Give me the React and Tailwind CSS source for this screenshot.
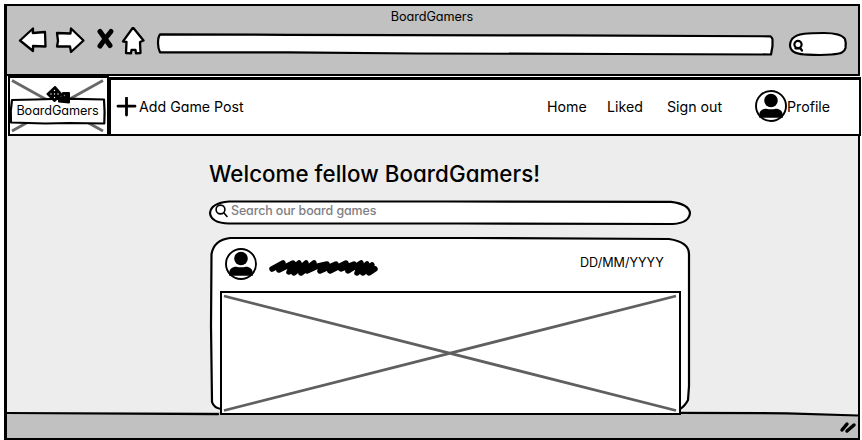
import React from "react";

function Sketch({ w, h, children }) {
  return (
    <svg className="pointer-events-none absolute inset-0 overflow-visible" width={w} height={h} viewBox={`0 0 ${w} ${h}`} fill="none" stroke="#000" strokeWidth="2.2" strokeLinejoin="round" strokeLinecap="round">
      {children}
    </svg>
  );
}

function Avatar() {
  return (
    <svg className="shrink-0" width="32" height="32" viewBox="0 0 32 32">
      <circle cx="16" cy="16" r="15" fill="#fff" stroke="#000" strokeWidth="1.9" />
      <circle cx="16" cy="10.5" r="6.800" />
      <path d="M4.200 27.800V25c0-4 3-6.300 7-6.300 3 .7 6.600.7 9.600 0 4 0 7 2.300 7 6.300v2.800Z" />
    </svg>
  );
}

function BrowserBar() {
  return (
    <header className="flex h-[70px] flex-col border-b-2 border-black bg-[#c1c1c1]">
      <div className="flex h-[21px] items-center justify-center pt-[1px] text-[12.700px] leading-none">
        <span className="mr-[1px] tracking-[-0.08px]">BoardGamers</span>
      </div>
      <div className="flex h-[28px] items-center">
        <svg className="ml-[11px]" width="130" height="28" viewBox="0 0 130 28" fill="#fff" stroke="#000" strokeWidth="2.300" strokeLinejoin="round">
          <path d="M2 13.500 15 1.500 14.800 6 27 5 27.500 19.500 15 19 15 24Z" />
          <path d="M39 6 52.500 6.500 53 1.500 65.500 13.500 53 25 52 19.500 39 19.500 40 14Z" />
          <path d="M82 4.500 92 18.500M93 4.500Q87.500 11 82 19" strokeWidth="5" strokeLinecap="round" />
          <path d="m115 .5 10.500 13-3.500 1.500 .5 11-4.500 .3-.5-3.500h-4l-.5 3.500-5-.3.500-11-3.500-.7Z" />
        </svg>
        <div className="relative ml-[10px] mt-[7px] h-[22px] w-[617px]">
          <Sketch w={617} h={22}>
            <path fill="#fff" d="M2 .3 130 .8 400 1.400 612.500 2.300q1.500 1 2 3V12l-1.500 8.500L460 20 260 19.500 130 18.300 2 18.300Q0 14 0 9 0 3 2 .3Z" />
          </Sketch>
        </div>
        <div className="relative ml-[14px] mt-[7px] h-[22px] w-[58px]">
          <Sketch w={58} h={22}>
            <path fill="#fff" d="M3 5C8-1 20-1 35-1c13 0 19 3 21 6 1 3 1 6 .5 9-1 4-4 6-14 6.500-10 1-17 .5-27 0C7 20 1 17 1 11Q1 8 3 5Z" />
            <circle cx="9" cy="10.500" r="3.600" />
            <path d="m6.500 14.500 5 0 1.500 2" />
          </Sketch>
        </div>
      </div>
    </header>
  );
}

function Logo() {
  return (
    <div className="relative flex h-[60px] w-[101px] shrink-0 items-end justify-center border-2 border-black bg-white pb-[11px]">
      <svg className="absolute inset-0" width="97" height="56" viewBox="0 0 97 56">
        <path d="M2 2.500 93 53M93 2.500 2 53" stroke="#686868" strokeWidth="2.800" />
      </svg>
      <div className="relative mr-[2px] flex h-[24px] w-[95px] items-center justify-center text-[12.700px] leading-none">
        <Sketch w={95} h={24}>
          <path fill="#fff" d="M2 1 25 .5 54-.3 94 .5Q95 13 94.300 24.500L60 24 35 24.500 1 23.500Q0 12 2 1Z" />
        </Sketch>
        <svg className="absolute left-[36px] top-[-13px]" width="26" height="20" viewBox="0 0 26 20">
          <path d="m9 1 6.500 7.500-7 6.500L1.500 8Z" stroke="#000" strokeWidth="2" strokeLinejoin="round" />
          <g fill="#fff"><circle cx="8.500" cy="4.500" r=".7" /><circle cx="5" cy="8" r=".7" /><circle cx="8.500" cy="8" r=".7" /><circle cx="12" cy="8" r=".7" /><circle cx="8.500" cy="11.500" r=".7" /></g>
          <path d="M17 7h6v9.500l-10-1v-3l3-1Z" stroke="#000" strokeWidth="2" strokeLinejoin="round" />
          <circle cx="18.500" cy="9.500" r=".8" fill="#777" />
        </svg>
        <span className="relative tracking-[-0.1px]">BoardGamers</span>
      </div>
    </div>
  );
}

function NavBar() {
  return (
    <div className="flex h-[60px] w-[854px] items-start bg-white pl-[1px]">
      <Logo />
      <nav className="mt-[1px] flex h-[59px] w-[752px] shrink-0 items-center border-2 border-t-3 border-black bg-white pl-[5px] text-[14.200px] leading-none">
        <svg className="shrink-0" width="21" height="20" viewBox="0 0 21 20">
          <path d="M10.500 1V18M2 9.200h17" stroke="#000" strokeWidth="2.800" strokeLinecap="round" />
        </svg>
        <span className="ml-[2px] w-[408px]">Add Game Post</span>
        <span className="w-[60px]">Home</span>
        <span className="w-[60px]">Liked</span>
        <span className="w-[88px]">Sign out</span>
        <div className="-mt-[2px] shrink-0">
          <Avatar />
        </div>
        <span>Profile</span>
      </nav>
    </div>
  );
}

function PostCard() {
  return (
    <article className="relative mt-[15px] h-[176px] w-[482px]">
      <Sketch w={482} h={176}>
        <path fill="#fff" d="M21 2 260 2 460 3Q480 6 480 18V150l-1 14q-3 6-8 9H12q-7-1-9-7L2 90 2.500 18Q5 4 21 2Z" />
      </Sketch>
      <div className="relative flex h-[55px] items-start pl-[16px] pt-[12px]">
        <Avatar />
        <svg className="ml-[11px] mt-[9px]" width="112" height="22" viewBox="0 0 112 22">
          <path d="M4 12 15 6 11 13 25 6 21 15 31 6 26 16 38 6 33 16 46 6 39 14 50 9 59 7 52 14 68 7 62 14 78 6 73 12 86 7 80 14 93 6 89 16 99 7 95 16 104 8 101 16 107 12" fill="none" stroke="#000" strokeWidth="5.500" strokeLinejoin="round" strokeLinecap="round" />
        </svg>
        <span className="ml-[200px] mt-[9px] text-[12.600px] leading-none">DD/MM/YYYY</span>
      </div>
      <div className="relative ml-[11px] h-[124px] w-[461px] border-[2.500px] border-black bg-white">
        <svg width="457" height="120" viewBox="0 0 457 120">
          <path d="M2 3 454 117.500M454 3 2 117.500" stroke="#5f5f5f" strokeWidth="2.800" />
        </svg>
      </div>
    </article>
  );
}

export default function App() {
  return (
    <div className="h-[440px] w-[862px] overflow-hidden bg-white pl-[4px] pt-[4px] font-['Inter',sans-serif] text-black [font-feature-settings:'cv11']">
      <div className="h-[436px] w-[856px] border-2 border-l-3 border-black bg-[#ededed]">
        <BrowserBar />
        <NavBar />
        <main className="relative z-10 flex h-[276px] flex-col pl-[202px]">
          <h1 className="mt-[26px] text-[22.300px] leading-[24px] tracking-[0.06px] [font-weight:450]">Welcome fellow BoardGamers!</h1>
          <div className="relative mt-[14px] flex h-[24px] w-[482px] items-center pl-[6px]">
            <Sketch w={482} h={24}>
              <path fill="#fff" d="M20 1.500 240 1.500 462 1.800Q480 4 481 13 480 23 464 24L250 23.500 20 23.500Q2 23 1 13 2 3 20 1.500Z" />
            </Sketch>
            <svg className="relative mt-[1px]" width="13" height="14" viewBox="0 0 13 14" fill="none" stroke="#000" strokeWidth="1.600" strokeLinecap="round">
              <circle cx="5.500" cy="5.500" r="4.400" />
              <path d="m9 9 3 3.500" />
            </svg>
            <span className="relative ml-[3px] pt-[1px] text-[12.400px] leading-none tracking-[-0.08px] text-[#7d7d83] [font-weight:450]">Search our board games</span>
          </div>
          <PostCard />
        </main>
        <footer className="relative h-[26px] bg-[#c1c1c1]">
          <Sketch w={851} h={26}>
            <path fill="#ededed" stroke="none" d="M672 0H851V3L780 1Z" />
            <path d="M0 1 211 2.200M672 .800 780 1.300 851 3.500" />
            <path d="m835 18 5-6m0 7 7-6" strokeWidth="3.500" />
          </Sketch>
        </footer>
      </div>
    </div>
  );
}
